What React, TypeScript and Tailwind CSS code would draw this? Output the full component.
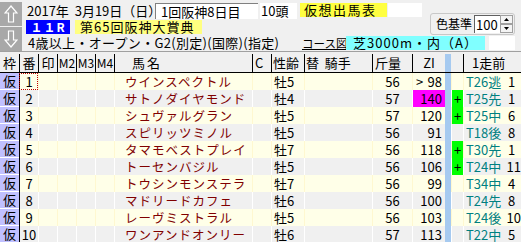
import React from "react";

type Horse = {
    no: number;
    name: string;
    sex: string;
    kinryo: number;
    zi: string;
    over?: boolean;
    ziHot?: boolean;
    plus?: boolean;
    prev: string;
    prevRank: number;
};

const horses: Horse[] = [
    {no: 1, name: "ウインスペクトル", sex: "牡5", kinryo: 56, zi: "98", over: true, prev: "T26逃", prevRank: 1},
    {no: 2, name: "サトノダイヤモンド", sex: "牡4", kinryo: 57, zi: "140", ziHot: true, plus: true, prev: "T25先", prevRank: 1},
    {no: 3, name: "シュヴァルグラン", sex: "牡5", kinryo: 57, zi: "120", plus: true, prev: "T25中", prevRank: 6},
    {no: 4, name: "スピリッツミノル", sex: "牡5", kinryo: 56, zi: "91", prev: "T18後", prevRank: 8},
    {no: 5, name: "タマモベストプレイ", sex: "牡7", kinryo: 56, zi: "118", plus: true, prev: "T30先", prevRank: 1},
    {no: 6, name: "トーセンバジル", sex: "牡5", kinryo: 56, zi: "106", plus: true, prev: "T24中", prevRank: 11},
    {no: 7, name: "トウシンモンステラ", sex: "牡7", kinryo: 56, zi: "99", prev: "T34中", prevRank: 4},
    {no: 8, name: "マドリードカフェ", sex: "牡6", kinryo: 56, zi: "100", prev: "T24先", prevRank: 8},
    {no: 9, name: "レーヴミストラル", sex: "牡5", kinryo: 56, zi: "103", prev: "T24後", prevRank: 10},
    {no: 10, name: "ワンアンドオンリー", sex: "牡6", kinryo: 57, zi: "113", prev: "T22中", prevRank: 5},
];

const font = {fontFamily: '"Noto Sans CJK JP", "DejaVu Sans", sans-serif'};

const ArrowButton = ({up}: {up: boolean}) => (
    <div className="w-[22px] h-[24px] bg-[#a8a8a8] flex items-center justify-center">
        <svg width="14" height="18" viewBox="0 0 14 18">
            <path
                d={up ? "M7 1 L13 8 L9.5 8 L9.5 17 L4.5 17 L4.5 8 L1 8 Z" : "M7 17 L13 10 L9.5 10 L9.5 1 L4.5 1 L4.5 10 L1 10 Z"}
                fill="none"
                stroke="#ffffff"
                strokeWidth="1.2"
            />
        </svg>
    </div>
);

const HeaderCell = ({w, children, className = ""}: {w: string; children?: React.ReactNode; className?: string}) => (
    <div className={`${w} min-w-0 h-full border-l border-black flex items-center whitespace-nowrap ${className}`}>{children}</div>
);

export default function App() {
    return (
        <div className="w-[521px] h-[242px] overflow-hidden bg-[#f0f0f0] text-black text-[13px] leading-[14px]" style={font}>
            {/* top panel */}
            <div className="h-[52px] flex border-b border-[#a0a0a0] whitespace-nowrap">
                <div className="flex flex-col gap-[1px] pt-[2px] w-[22px]">
                    <ArrowButton up={true} />
                    <ArrowButton up={false} />
                </div>
                <div className="flex-1 min-w-0 pl-[4px] pt-[3px] flex flex-col">
                    <div className="flex items-start h-[16px]">
                        <div className="w-[129px] min-w-0 h-[16px] flex items-center pl-[1px]">2017年&nbsp;&nbsp;3月19日（日）</div>
                        <div className="w-[103px] min-w-0 h-[16px] bg-white border-l border-t border-[#808080] flex items-center pl-[5px]">1回阪神8日目</div>
                        <div className="w-[37px] min-w-0 h-[16px] bg-white ml-[2px] flex items-center pl-[1px]">10頭</div>
                        <div className="w-[87px] min-w-0 h-[14px] bg-[#ffff40] ml-[3px] flex items-center pl-[4px] tracking-[1.5px]">仮想出馬表</div>
                        <div className="w-[34px] min-w-0 h-[14px] bg-white ml-[1px]"></div>
                        <div className="ml-[8px] mt-[10px] w-[85px] min-w-0 h-[22px] border border-[#c8c8c8] rounded-[3px] bg-[#f0f0f0] flex items-center pl-[5px] text-[12px]">
                            <span>色基準</span>
                            <div className="ml-[2px] w-[26px] min-w-0 h-[18px] bg-white border-l border-t border-[#606060] flex items-center pl-[1px] text-[13px]">100</div>
                            <div className="w-[13px] h-[18px] flex flex-col">
                                <div className="h-[9px] border border-[#a0a0a0] bg-[#f4f4f4] flex items-center justify-center">
                                    <svg width="5" height="3" viewBox="0 0 5 3"><path d="M0 3 L2.5 0 L5 3 Z" fill="#000" /></svg>
                                </div>
                                <div className="h-[9px] border border-[#a0a0a0] bg-[#f4f4f4] flex items-center justify-center">
                                    <svg width="5" height="3" viewBox="0 0 5 3"><path d="M0 0 L2.5 3 L5 0 Z" fill="#000" /></svg>
                                </div>
                            </div>
                        </div>
                    </div>
                    <div className="flex items-center h-[16px]">
                        <div className="w-[44px] min-w-0 h-[14px] bg-[#0000ff] text-white font-bold flex items-center justify-center tracking-[1px] text-[12px]">１１R</div>
                        <div className="w-[127px] min-w-0 h-[14px] bg-[#ffff80] ml-[5px] flex items-center pl-[5px] tracking-[1px]">第65回阪神大賞典</div>
                    </div>
                    <div className="flex items-center h-[16px]">
                        <div className="w-[276px] min-w-0 pl-[2px] tracking-[0.3px]">4歳以上・オープン・G2(別定)(国際)(指定)</div>
                        <div className="underline w-[44px] min-w-0 text-[11.5px]">コース図</div>
                        <div className="w-[139px] min-w-0 h-[14px] bg-[#80ffff] flex items-center justify-center tracking-[1px]">芝3000m・内（A）</div>
                        <div className="w-[26px] min-w-0 h-[14px] bg-white ml-[4px]"></div>
                    </div>
                </div>
            </div>

            {/* grid header */}
            <div className="mt-[2px] h-[19px] flex items-stretch border-b border-black">
                <div className="w-[19px] min-w-0 flex items-center justify-center">枠</div>
                <HeaderCell w="w-[19px]" className="justify-center">番</HeaderCell>
                <HeaderCell w="w-[19px]" className="justify-center">印</HeaderCell>
                <HeaderCell w="w-[19px]" className="justify-center text-[12px]">M2</HeaderCell>
                <HeaderCell w="w-[19px]" className="justify-center text-[12px]">M3</HeaderCell>
                <HeaderCell w="w-[19px]" className="justify-center text-[12px]">M4</HeaderCell>
                <HeaderCell w="w-[138px]" className="pl-[17px] tracking-[2px]">馬名</HeaderCell>
                <HeaderCell w="w-[19px]" className="pl-[2px]">C</HeaderCell>
                <HeaderCell w="w-[33px]" className="pl-[1px]">性齢</HeaderCell>
                <HeaderCell w="w-[68px]" className="pl-[1px]">替&nbsp;&nbsp;騎手</HeaderCell>
                <HeaderCell w="w-[40px]" className="pl-[2px]">斤量</HeaderCell>
                <HeaderCell w="w-[33px]" className="justify-center">ZI</HeaderCell>
                <div className="w-[6px] bg-[#a6caf0]"></div>
                <div className="w-[12px]"></div>
                <HeaderCell w="flex-1" className="pl-[8px]">1走前</HeaderCell>
            </div>

            {/* rows */}
            <div className="flex flex-col leading-[16px]">
                {horses.map((h) => {
                    const odd = h.no % 2 === 1;
                    const bg = odd ? "bg-[#ffffe8]" : "bg-[#f0f0f0]";
                    const sep = odd ? "border-[#fff8d0]" : "border-white";
                    return (
                        <div key={h.no} className={`h-[17px] flex items-stretch whitespace-nowrap ${bg}`}>
                            <div className="w-[19px] bg-[#c0c0ff] border-b border-white flex items-center justify-center">仮</div>
                            <div className={`w-[19px] border-l border-black flex items-center justify-center ${h.no === 1 ? "outline outline-1 outline-dotted outline-[#c00000] -outline-offset-1" : ""}`}>
                                {h.no}
                            </div>
                            <div className={`w-[19px] border-l ${sep}`}></div>
                            <div className={`w-[19px] border-l ${sep}`}></div>
                            <div className={`w-[19px] border-l ${sep}`}></div>
                            <div className={`w-[19px] border-l ${sep}`}></div>
                            <div className={`w-[138px] min-w-0 border-l ${sep} flex items-center pl-[10px] text-[#800000] text-[12.5px] tracking-[1px]`}>
                                {h.name}
                            </div>
                            <div className={`w-[19px] border-l ${sep}`}></div>
                            <div className={`w-[33px] min-w-0 border-l ${sep} flex items-center pl-[2px]`}>{h.sex}</div>
                            <div className={`w-[68px] border-l ${sep}`}></div>
                            <div className={`w-[40px] min-w-0 border-l ${sep} flex items-center justify-center`}>{h.kinryo}</div>
                            <div className={`w-[33px] min-w-0 border-l ${sep} flex items-center justify-between pl-[3px] pr-[3px] ${h.ziHot ? "bg-[#ff00ff]" : ""}`}>
                                <span>{h.over ? ">" : ""}</span>
                                <span>{h.zi}</span>
                            </div>
                            <div className="w-[6px] bg-[#a6caf0]"></div>
                            <div className={`w-[12px] min-w-0 border-l ${sep} flex items-center justify-center ${h.plus ? "bg-[#00ff00]" : ""}`}>
                                {h.plus ? "+" : ""}
                            </div>
                            <div className={`flex-1 min-w-0 border-l ${sep} flex items-center pl-[2px]`}>
                                <span className="text-[#008080] w-[40px]">{h.prev}</span>
                                <span className="pl-[2px]">{h.prevRank}</span>
                            </div>
                        </div>
                    );
                })}
            </div>
        </div>
    );
}
